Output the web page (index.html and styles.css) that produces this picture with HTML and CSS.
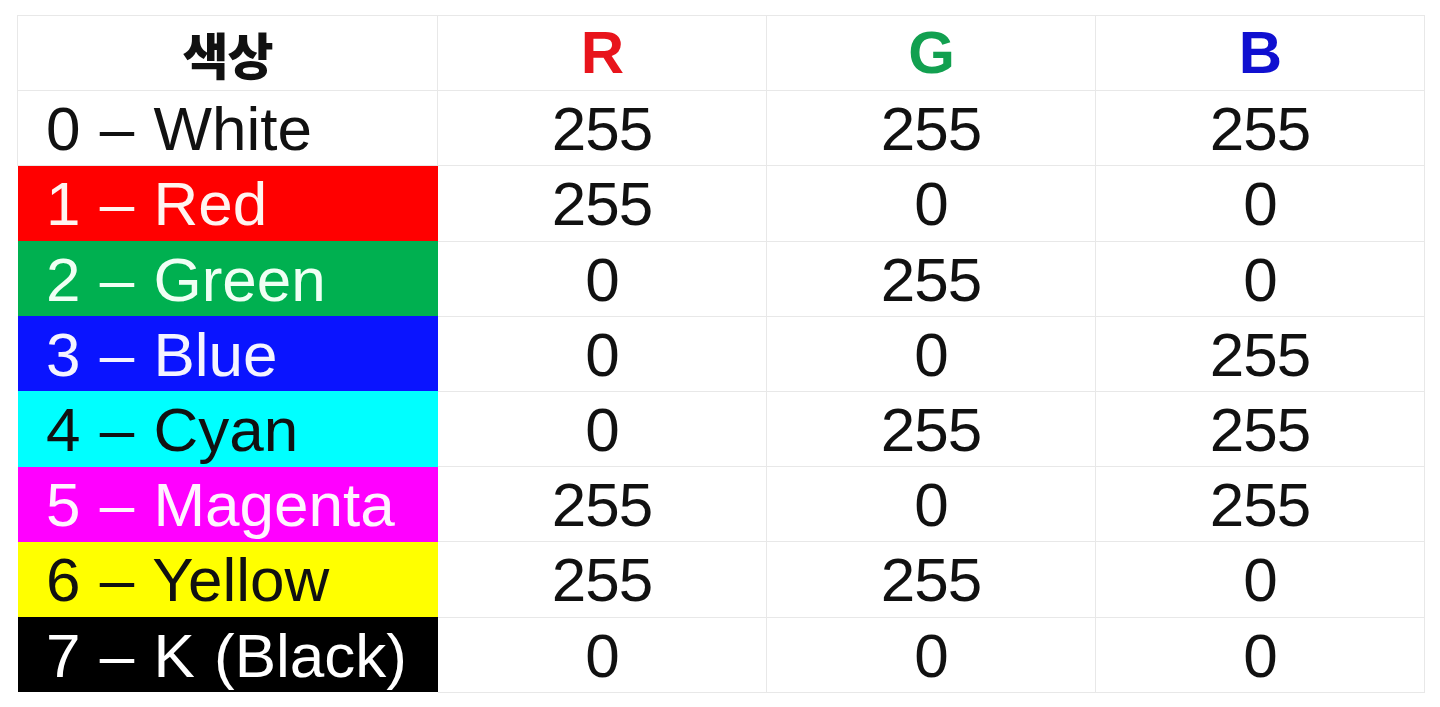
FILE: index.html
```html
<!DOCTYPE html>
<html lang="ko">
<head>
<meta charset="utf-8">
<title>색상 RGB</title>
<link rel="stylesheet" href="styles.css">
</head>
<body>
<table class="rgb-table">
  <colgroup>
    <col class="col-name">
    <col class="col-val">
    <col class="col-val">
    <col class="col-val">
  </colgroup>
  <thead>
    <tr class="head-row">
      <th class="h-name">색상</th>
      <th class="h-r">R</th>
      <th class="h-g">G</th>
      <th class="h-b">B</th>
    </tr>
  </thead>
  <tbody>
    <tr><td class="name c-white">0 – White</td><td>255</td><td>255</td><td>255</td></tr>
    <tr><td class="name c-red">1 – Red</td><td>255</td><td>0</td><td>0</td></tr>
    <tr><td class="name c-green">2 – Green</td><td>0</td><td>255</td><td>0</td></tr>
    <tr><td class="name c-blue">3 – Blue</td><td>0</td><td>0</td><td>255</td></tr>
    <tr><td class="name c-cyan">4 – Cyan</td><td>0</td><td>255</td><td>255</td></tr>
    <tr><td class="name c-magenta">5 – Magenta</td><td>255</td><td>0</td><td>255</td></tr>
    <tr><td class="name c-yellow">6 – Yellow</td><td>255</td><td>255</td><td>0</td></tr>
    <tr><td class="name c-black">7 – K (Black)</td><td>0</td><td>0</td><td>0</td></tr>
  </tbody>
</table>
</body>
</html>
```
FILE: styles.css
```css
html, body {
  margin: 0;
  padding: 0;
  background: #ffffff;
}
body {
  padding: 15px 17px 0 17px;
  font-family: "Liberation Sans", "Noto Sans CJK KR", sans-serif;
  color: #111;
}
.rgb-table {
  border-collapse: collapse;
  table-layout: fixed;
  width: 1406px;
}
.col-name { width: 420px; }
.col-val { width: 329px; }
.rgb-table th,
.rgb-table td {
  border: 1px solid #e8e8e8;
  height: 75.2px;
  padding: 2px 0 0 0;
  box-sizing: border-box;
  text-align: center;
  vertical-align: middle;
  font-size: 62px;
  font-weight: 400;
  line-height: 1;
  letter-spacing: -1px;
}
.rgb-table th {
  padding: 0;
  font-size: 60px;
  font-weight: 700;
}
.h-name {
  font-family: "Noto Sans CJK KR", sans-serif;
  font-size: 50px !important;
  font-weight: 900 !important;
  color: #111;
}
.h-r { color: #e8141c; }
.h-g { color: #12a050; }
.h-b { color: #1010d0; }
.rgb-table td.name {
  text-align: left;
  padding-left: 28px;
  letter-spacing: 0;
  word-spacing: 2px;
  border-color: transparent;
}
.rgb-table td.c-white { border-color: #e8e8e8; }
.c-white { background: #ffffff; color: #111; }
.c-red { background: #ff0000; color: #fff4f0; }
.c-green { background: #00b050; color: #f0fff4; }
.c-blue { background: #0a14ff; color: #f4f4ff; }
.c-cyan { background: #00ffff; color: #111; }
.c-magenta { background: #ff00ff; color: #fff4ff; }
.c-yellow { background: #ffff00; color: #111; }
.c-black { background: #000000; color: #ffffff; }
```
